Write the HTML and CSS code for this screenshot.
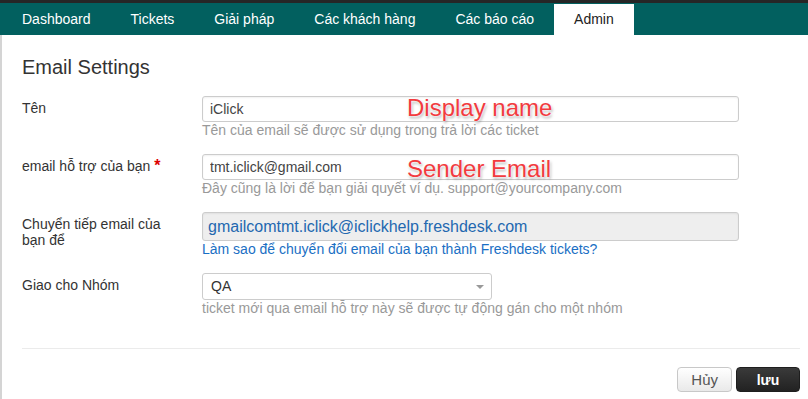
FILE: index.html
```
<!DOCTYPE html>
<html lang="vi">

<head>
    <meta charset="UTF-8">
    <meta name="viewport" content="width=device-width, initial-scale=1.0">
    <title>Email Settings</title>
    <link rel="stylesheet" href="styles.css">
</head>

<body>
    <div class="topbar"></div>
    <ul class="navs">
        <li><a href="javascript:;">Dashboard</a></li>
        <li><a href="javascript:;">Tickets</a></li>
        <li><a href="javascript:;">Giải pháp</a></li>
        <li><a href="javascript:;">Các khách hàng</a></li>
        <li><a href="javascript:;">Các báo cáo</a></li>
        <li class="active"><a href="javascript:;">Admin</a></li>
    </ul>

    <div class="page">
        <h2 class="title">Email Settings</h2>

        <div class="row">
            <label class="lbl">Tên</label>
            <div class="field">
                <input class="ipt" type="text" value="iClick">
                <p class="hint">Tên của email sẽ được sử dụng trong trả lời các ticket</p>
            </div>
            <span class="note note-1">Display name</span>
        </div>

        <div class="row">
            <label class="lbl">email hỗ trợ của bạn <b class="req">*</b></label>
            <div class="field">
                <input class="ipt" type="text" value="tmt.iclick@gmail.com">
                <p class="hint">Đây cũng là lời để bạn giải quyết ví dụ. support@yourcompany.com</p>
            </div>
            <span class="note note-2">Sender Email</span>
        </div>

        <div class="row">
            <label class="lbl">Chuyển tiếp email của bạn để</label>
            <div class="field">
                <div class="ipt readonly">gmailcomtmt.iclick@iclickhelp.freshdesk.com</div>
                <a class="help-link" href="javascript:;">Làm sao để chuyển đổi email của bạn thành Freshdesk tickets?</a>
            </div>
        </div>

        <div class="row row-last">
            <label class="lbl">Giao cho Nhóm</label>
            <div class="field">
                <div class="sel">QA<span class="caret"></span></div>
                <p class="hint">ticket mới qua email hỗ trợ này sẽ được tự động gán cho một nhóm</p>
            </div>
        </div>

        <div class="actions">
            <button class="btn">Hủy</button>
            <button class="btn btn-dark">lưu</button>
        </div>
    </div>
</body>

</html>
```

FILE: styles.css
```
* {
    box-sizing: border-box;
}

body {
    margin: 0;
    font-family: "Liberation Sans", Arial, sans-serif;
    font-size: 14px;
    color: #333;
    background: #fff;
}

a,
ul,
li {
    list-style: none;
    text-decoration: none;
    margin: 0;
    padding: 0;
}

.topbar {
    height: 3px;
    background: #262626;
}

.navs {
    display: flex;
    height: 32px;
    padding-left: 2px;
    background: #02605f;
}

.navs li {
    margin-top: 1px;
}

.navs li a {
    display: block;
    height: 31px;
    line-height: 31px;
    padding: 0 20px;
    color: #fff;
}

.navs li.active a {
    background: #fff;
    color: #222;
}

.page {
    position: relative;
    min-height: 364px;
    padding: 20px 8px 10px 20px;
    border-left: 2px solid #d4d4d4;
}

.title {
    margin: 0 0 17px;
    font-size: 20px;
    line-height: 24px;
    font-weight: normal;
    color: #333;
}

.row {
    position: relative;
    display: flex;
    margin-bottom: 16px;
}

.row-last {
    margin-bottom: 32px;
}

.lbl {
    width: 180px;
    padding: 4px 20px 0 0;
    line-height: 16px;
    color: #333;
}

.req {
    color: #d00;
    font-size: 16px;
}

.field {
    display: flex;
    flex-direction: column;
    align-items: flex-start;
}

.ipt {
    width: 537px;
    height: 26px;
    padding: 0 7px;
    border: 1px solid #ccc;
    border-radius: 3px;
    box-shadow: inset 0 1px 2px rgba(0, 0, 0, .06);
    font-family: inherit;
    font-size: 14px;
    color: #444;
}

.readonly {
    height: 29px;
    line-height: 27px;
    padding: 0 5px;
    background: #eee;
    font-size: 16px;
    color: #2368b0;
}

.hint {
    margin: 0;
    line-height: 16px;
    color: #999;
}

.help-link {
    line-height: 16px;
    color: #1a6fc4;
}

.sel {
    position: relative;
    width: 290px;
    height: 27px;
    line-height: 25px;
    padding: 0 8px;
    border: 1px solid #ccc;
    border-radius: 3px;
    color: #333;
}

.caret {
    position: absolute;
    right: 7px;
    top: 11px;
    border-left: 4px solid transparent;
    border-right: 4px solid transparent;
    border-top: 4px solid #999;
}

/* chú thích đỏ đè lên ô nhập */
.note {
    position: absolute;
    left: 385px;
    font-size: 24px;
    line-height: 24px;
    color: #f23b3f;
    text-shadow: 0 0 2px #fff, 0 0 3px #fff, 1px 2px 3px rgba(0, 0, 0, .35);
}

.note-1 {
    top: 0;
}

.note-2 {
    top: 3px;
}

.actions {
    display: flex;
    justify-content: flex-end;
    gap: 4px;
    padding-top: 18px;
    border-top: 1px solid #ebebeb;
}

.btn {
    height: 25px;
    padding: 0 13px;
    border: 1px solid #c8c8c8;
    border-radius: 4px;
    background: linear-gradient(#fff, #e9e9e9);
    font-family: inherit;
    font-size: 15px;
    color: #555;
}

.btn-dark {
    width: 64px;
    border-color: #1e1e1e;
    background: linear-gradient(#3a3a3a, #222);
    font-size: 14px;
    font-weight: bold;
    color: #fff;
}
```
